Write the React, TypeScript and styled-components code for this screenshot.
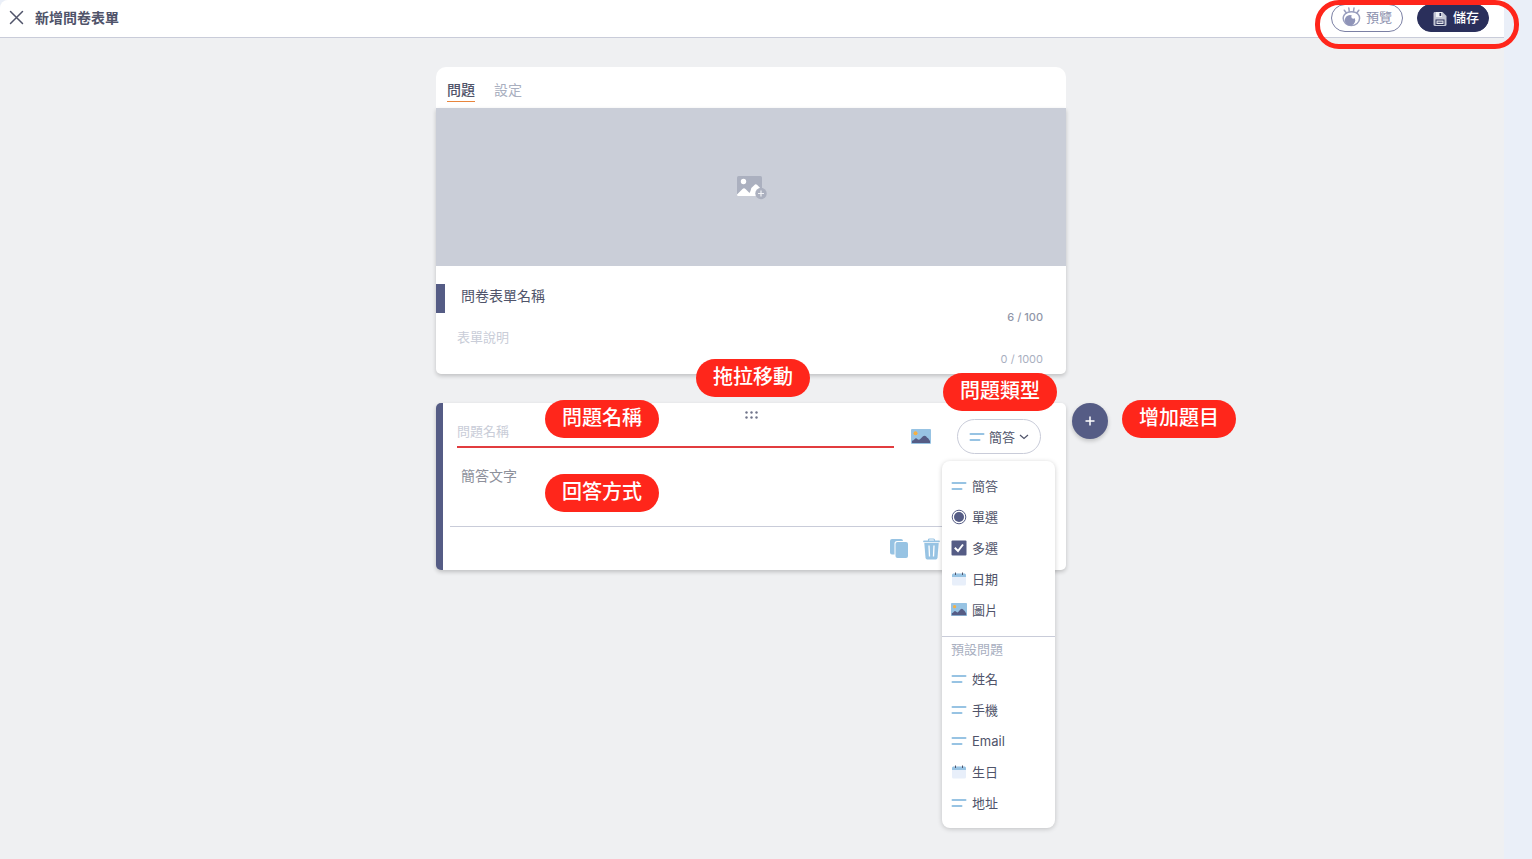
import React, { useState } from "react";
import styled, { createGlobalStyle, css } from "styled-components";

const color = {
  navy: "#2a2f5b",
  indigo: "#555c85",
  ink: "#50546a",
  muted: "#a9afbf",
  faint: "#c9cdd8",
  line: "#c9ccd9",
  sky: "#97c3e3",
  red: "#ff261b",
};

const GlobalStyle = createGlobalStyle`
  *, *::before, *::after { box-sizing: border-box; }
  body {
    margin: 0;
    background: #eaeff8;
    color: ${color.ink};
    font-family: Inter, "Noto Sans CJK TC", sans-serif;
    font-size: 13px;
  }
  button, input {
    margin: 0;
    padding: 0;
    border: 0;
    background: none;
    color: inherit;
    font: inherit;
  }
  button { cursor: pointer; }
  svg { display: block; flex: none; }
`;

const Page = styled.div`
  display: flex;
  flex-direction: column;
  min-height: 100vh;
  margin-right: 28px;
  background: #eff0f2;
  border-top-left-radius: 8px;
`;

const Header = styled.header`
  position: relative;
  display: flex;
  align-items: center;
  justify-content: space-between;
  height: 38px;
  padding: 0 15px 2px 9px;
  background: #fff;
  border-bottom: 1px solid ${color.line};
  border-top-left-radius: 8px;
`;

const HeaderGroup = styled.div<{ $gap: number }>`
  display: flex;
  align-items: center;
  gap: ${(p) => p.$gap}px;
`;

const PageTitle = styled.h1`
  margin: 0;
  font-size: 14px;
  line-height: 20px;
  font-weight: 700;
`;

const PillButton = styled.button<{ $solid?: boolean }>`
  display: flex;
  align-items: center;
  justify-content: center;
  gap: 5px;
  width: 72px;
  height: 28px;
  padding-bottom: 2px;
  border: 1px solid #7b80a4;
  border-radius: 14px;
  background: #fff;
  color: #8b90ae;
  ${(p) =>
    p.$solid &&
    css`
      gap: 6px;
      padding-left: 6px;
      border-color: ${color.navy};
      background: ${color.navy};
      color: #fff;
      font-weight: 500;
    `}
`;

const Highlight = styled.div`
  position: absolute;
  top: 0;
  right: -15px;
  width: 204px;
  height: 49px;
  border: 5px solid ${color.red};
  border-radius: 24px;
  pointer-events: none;
`;

const Main = styled.main`
  display: flex;
  justify-content: center;
  padding: 29px 2px 31px 0;
`;

const Column = styled.div`
  position: relative;
  width: 100%;
  max-width: 630px;
`;

const Tabs = styled.nav`
  display: flex;
  align-items: flex-start;
  gap: 19px;
  height: 41px;
  padding: 12px 11px 0;
  background: #fff;
  border-radius: 10px 10px 0 0;
`;

const Tab = styled.button<{ $active: boolean }>`
  height: 23px;
  border-bottom: 1px solid ${(p) => (p.$active ? "#e8853d" : "transparent")};
  color: ${(p) => (p.$active ? color.ink : color.muted)};
  font-size: 14px;
  line-height: 22px;
  font-weight: ${(p) => (p.$active ? 500 : 400)};
`;

const Card = styled.section`
  background: #fff;
  border-radius: 0 0 5px 5px;
  box-shadow: 0 2px 4px rgba(0, 0, 0, 0.2);
`;

const Banner = styled.button`
  display: flex;
  align-items: center;
  justify-content: center;
  width: 100%;
  height: 158px;
  padding-top: 2px;
  background: #caced8;
`;

const FormInfo = styled.div`
  display: flex;
  align-items: flex-start;
  gap: 12px;
  padding: 18px 23px 8px 0;
`;

const Accent = styled.span`
  width: 9px;
  height: 29px;
  background: ${color.indigo};
`;

const Fields = styled.div`
  display: flex;
  flex: 1;
  flex-direction: column;
  gap: 2px;
`;

const TextInput = styled.input<{ $large?: boolean }>`
  width: 100%;
  height: 24px;
  outline: none;
  padding: 0 0 2px ${(p) => (p.$large ? 4 : 0)}px;
  font-size: ${(p) => (p.$large ? 14 : 13)}px;
  &::placeholder {
    color: ${color.faint};
    opacity: 1;
  }
`;

const Counter = styled.output<{ $strong?: boolean }>`
  color: ${(p) => (p.$strong ? "#9096a8" : color.muted)};
  font-size: 11px;
  line-height: 14px;
  font-weight: ${(p) => (p.$strong ? 500 : 400)};
  text-align: right;
`;

const QuestionCard = styled(Card)`
  position: relative;
  margin-top: 29px;
  border-left: 7px solid ${color.indigo};
  border-radius: 5px;
`;

const DragHandle = styled.button`
  display: flex;
  align-items: flex-end;
  justify-content: center;
  width: 100%;
  height: 16px;
  padding-right: 7px;
  cursor: grab;
`;

const QuestionRow = styled.div`
  display: flex;
  align-items: center;
  height: 35px;
  padding: 0 25px 0 14px;
`;

const QuestionInput = styled(TextInput)`
  flex: 1;
  align-self: flex-start;
  height: 29px;
  margin-right: 17px;
  padding-bottom: 4px;
  border-bottom: 2px solid #e23c3f;
`;

const IconButton = styled.button`
  display: flex;
`;

const TypePicker = styled.div`
  position: relative;
  margin-left: 26px;
`;

const TypeButton = styled.button`
  display: flex;
  align-items: center;
  justify-content: center;
  gap: 4px;
  width: 84px;
  height: 35px;
  border: 1px solid ${color.line};
  border-radius: 18px;
  background: #fff;
`;

const Menu = styled.div`
  position: absolute;
  z-index: 2;
  top: 42px;
  right: -14px;
  width: 113px;
  background: #fff;
  border-radius: 8px;
  box-shadow: 0 1px 5px rgba(0, 0, 0, 0.2);
`;

const MenuGroup = styled.div`
  padding: 9px 0 11px;
  & + & {
    padding: 0 0 10px;
    border-top: 1px solid ${color.line};
  }
`;

const MenuCaption = styled.p`
  margin: 0 0 2px;
  padding-left: 9px;
  color: ${color.muted};
  line-height: 24px;
`;

const MenuItem = styled.button`
  display: flex;
  align-items: center;
  gap: 5px;
  width: 100%;
  height: 31px;
  padding-left: 9px;
  text-align: left;
`;

const AnswerInput = styled(TextInput)`
  display: block;
  height: 28px;
  margin: 8px 0 36px;
  padding-left: 18px;
  &::placeholder {
    color: #8d909b;
  }
`;

const CardActions = styled.div`
  display: flex;
  align-items: center;
  justify-content: flex-end;
  gap: 15px;
  height: 44px;
  margin: 0 11px 0 7px;
  padding-right: 115px;
  border-top: 1px solid ${color.line};
`;

const AddButton = styled.button`
  position: absolute;
  top: 0;
  left: calc(100% + 6px);
  display: flex;
  align-items: center;
  justify-content: center;
  width: 36px;
  height: 36px;
  border-radius: 50%;
  background: ${color.indigo};
  box-shadow: 0 2px 4px rgba(0, 0, 0, 0.2);
`;

const Note = styled.span<{ $left: number; $top: number }>`
  position: absolute;
  z-index: 3;
  left: ${(p) => p.$left}px;
  top: ${(p) => p.$top}px;
  display: flex;
  justify-content: center;
  width: 114px;
  height: 38px;
  border-radius: 19px;
  background: ${color.red};
  color: #fff;
  font-size: 20px;
  line-height: 36px;
  font-weight: 500;
  pointer-events: none;
`;

const CloseIcon = () => (
  <svg width="15" height="15" viewBox="0 0 15 15" fill="none" stroke={color.ink} strokeWidth="1.5" strokeLinecap="round">
    <path d="M1.5 1.5l12 12M13.5 1.5l-12 12" />
  </svg>
);

const EyeIcon = () => (
  <svg width="19" height="20" viewBox="0 0 19 20">
    <g fill="none" stroke="#9a9fbe" strokeWidth="1.5" strokeLinecap="round">
      <path d="M5 5.6C2.600 7 1.200 9.200 1.200 11.300c0 4 3.600 7.300 8.100 7.300s8.300-3.300 8.300-7.300c0-2.200-1.300-4.300-3.500-5.600" />
      <path d="M5 5.600q4.500-1.800 9.100 0" />
      <path d="M7.300 4.500L6.800 1M11.500 4.500L12 1M4.300 6L2.300 3.200M14.800 6l2-2.800" />
    </g>
    <circle cx="8" cy="13.200" r="5.200" fill="#8f94b8" />
    <circle cx="11.300" cy="9.700" r="2" fill="#fff" />
  </svg>
);

const SaveIcon = () => (
  <svg width="14" height="18" viewBox="0 -4 14 18">
    <path d="M1.5 0H9.500L13.500 4V12.500q0 1.500-1.500 1.500H2Q.5 14 .5 12.500V1.500Q.5 0 1.500 0z" fill="#c3c6d5" />
    <path d="M3 0h6v5H3z" fill="#eef0f5" />
    <path d="M6.500 1h1.700v3H6.500z" fill={color.navy} />
    <path d="M2.500 7.500h9v5.500h-9z" fill={color.navy} />
    <path d="M3.500 8.500h7v3.500h-7z" fill="#e9eaf0" />
    <path d="M4.500 10.200h5" stroke={color.navy} />
  </svg>
);

const AddImageIcon = () => (
  <svg width="31" height="24" viewBox="0 0 31 24">
    <rect x="1" y="0" width="25" height="20" rx="1.5" fill="#abb0bf" />
    <circle cx="7.500" cy="5.500" r="2.700" fill="#fff" />
    <path d="M1 18.500l5.500-5.500q1.500-1.300 3 0l4 4 1-2 .800-3 3.700-3.500q1-.7 2 .3l5 5.200V20H2q-1 0-1-1z" fill="#fff" />
    <circle cx="25" cy="17.500" r="5.700" fill="#abb0bf" />
    <path d="M25 14.500v6M22 17.500h6" stroke="#f1f2f5" strokeWidth="1.200" />
  </svg>
);

const ImageIcon = ({ width, height }: { width: number; height: number }) => (
  <svg width={width} height={height} viewBox="0 0 20 15" preserveAspectRatio="none">
    <rect width="20" height="15" rx="1" fill={color.sky} />
    <circle cx="4.500" cy="4.200" r="2" fill="#f6b042" />
    <path
      d="M1 14v-2.200q1.500-.3 2.500-1.600 1.500-1.700 3 0l1 .600q1 .2 1.800-.8l2.700-2.700q1.500-1.200 3 0l1.200 1.400q.8.100 1.300 1l1.500 2.300v2z"
      fill={color.indigo}
    />
  </svg>
);

const LinesIcon = () => (
  <svg width="16" height="10" viewBox="0 0 16 10" stroke={color.sky} strokeWidth="2" strokeLinecap="round">
    <path d="M1.5 2h13M1.5 8h9" />
  </svg>
);

const RadioIcon = () => (
  <svg width="16" height="16" viewBox="0 0 16 16">
    <circle cx="8" cy="8" r="6.800" fill="#fff" stroke={color.indigo} />
    <circle cx="8" cy="8" r="5" fill={color.indigo} />
  </svg>
);

const CheckIcon = () => (
  <svg width="16" height="16" viewBox="0 0 16 16">
    <rect x=".5" y=".5" width="15" height="15" rx="1" fill={color.indigo} />
    <path d="M3.800 7.800l3.200 3.200 5-6.500" fill="none" stroke="#fff" strokeWidth="2" />
  </svg>
);

const CalendarIcon = () => (
  <svg width="16" height="14" viewBox="0 0 16 14">
    <rect x="1" y="1.500" width="14" height="12" rx="1.500" fill="#e8effa" />
    <path d="M1 5V3q0-1.500 1.500-1.500h11Q15 1.500 15 3v2z" fill={color.sky} />
    <path d="M4.500.5v2.500M11.500 .5v2.500" stroke={color.ink} />
  </svg>
);

const CopyIcon = () => (
  <svg width="18" height="19" viewBox="0 0 18 19" fill={color.sky}>
    <path d="M2 0h9q2 0 2 2H7Q4.500 2 4.500 4.500V15.500H2q-2 0-2-2V2Q0 0 2 0z" />
    <rect x="5.500" y="3" width="12.500" height="16" rx="2" />
  </svg>
);

const TrashIcon = () => (
  <svg width="17" height="22" viewBox="0 0 17 22" fill="none">
    <path d="M5.500 3V2q0-1 1-1h4q1 0 1 1v1" stroke={color.sky} strokeWidth="1.200" />
    <path d="M1 3.300h15" stroke={color.sky} strokeWidth="1.800" strokeLinecap="round" />
    <path d="M1.300 5h14.400l-1.200 14.800q-.2 1.700-1.700 1.700H4.200q-1.500 0-1.700-1.700z" fill={color.sky} />
    <path d="M6 7.500l.5 11M11 7.500l-.5 11" stroke="#fff" strokeWidth="1.300" />
  </svg>
);

const DotsIcon = () => (
  <svg width="13" height="8" viewBox="0 0 13 8" fill="#70748a">
    {[1.5, 6.5, 11.5].map((x) => (
      <React.Fragment key={x}>
        <circle cx={x} cy="1.5" r="1.200" />
        <circle cx={x} cy="6.5" r="1.200" />
      </React.Fragment>
    ))}
  </svg>
);

const ChevronIcon = () => (
  <svg width="10" height="6" viewBox="0 0 10 6" fill="none" stroke={color.ink} strokeWidth="1.200">
    <path d="M1 1l4 3.500L9 1" />
  </svg>
);

const PlusIcon = () => (
  <svg width="10" height="10" viewBox="0 0 10 10" stroke="#fff" strokeWidth="1.500">
    <path d="M5 .5v9M.5 5h9" />
  </svg>
);

const basicTypes = [
  { label: "簡答", icon: <LinesIcon /> },
  { label: "單選", icon: <RadioIcon /> },
  { label: "多選", icon: <CheckIcon /> },
  { label: "日期", icon: <CalendarIcon /> },
  { label: "圖片", icon: <ImageIcon width={16} height={13} /> },
];

const presetTypes = [
  { label: "姓名", icon: <LinesIcon /> },
  { label: "手機", icon: <LinesIcon /> },
  { label: "Email", icon: <LinesIcon /> },
  { label: "生日", icon: <CalendarIcon /> },
  { label: "地址", icon: <LinesIcon /> },
];

const notes = [
  { text: "拖拉移動", left: 260, top: 292 },
  { text: "問題類型", left: 507, top: 306 },
  { text: "問題名稱", left: 109, top: 333 },
  { text: "增加題目", left: 686, top: 333 },
  { text: "回答方式", left: 109, top: 407 },
];

export default function App() {
  const [tab, setTab] = useState("問題");
  const [title, setTitle] = useState("問卷表單名稱");
  const [description, setDescription] = useState("");
  const [open, setOpen] = useState(true);

  return (
    <>
      <GlobalStyle />
      <Page>
        <Header>
          <HeaderGroup $gap={11}>
            <IconButton type="button" aria-label="關閉">
              <CloseIcon />
            </IconButton>
            <PageTitle>新增問卷表單</PageTitle>
          </HeaderGroup>
          <HeaderGroup $gap={14}>
            <PillButton type="button">
              <EyeIcon />
              預覽
            </PillButton>
            <PillButton type="button" $solid>
              <SaveIcon />
              儲存
            </PillButton>
          </HeaderGroup>
          <Highlight />
        </Header>

        <Main>
          <Column>
            <Tabs>
              {["問題", "設定"].map((name) => (
                <Tab key={name} type="button" $active={tab === name} onClick={() => setTab(name)}>
                  {name}
                </Tab>
              ))}
            </Tabs>
            <Card>
              <Banner type="button" aria-label="新增封面圖片">
                <AddImageIcon />
              </Banner>
              <FormInfo>
                <Accent />
                <Fields>
                  <TextInput
                    $large
                    aria-label="表單名稱"
                    value={title}
                    maxLength={100}
                    onChange={(e) => setTitle(e.target.value)}
                  />
                  <Counter $strong>{title.length} / 100</Counter>
                  <TextInput
                    aria-label="表單說明"
                    placeholder="表單說明"
                    value={description}
                    maxLength={1000}
                    onChange={(e) => setDescription(e.target.value)}
                  />
                  <Counter>{description.length} / 1000</Counter>
                </Fields>
              </FormInfo>
            </Card>

            <QuestionCard>
              <DragHandle type="button" aria-label="拖拉移動">
                <DotsIcon />
              </DragHandle>
              <QuestionRow>
                <QuestionInput aria-label="問題名稱" placeholder="問題名稱" />
                <IconButton type="button" aria-label="插入圖片">
                  <ImageIcon width={20} height={15} />
                </IconButton>
                <TypePicker>
                  <TypeButton type="button" aria-haspopup="menu" aria-expanded={open} onClick={() => setOpen(!open)}>
                    <LinesIcon />
                    簡答
                    <ChevronIcon />
                  </TypeButton>
                  {open && (
                    <Menu role="menu">
                      <MenuGroup>
                        {basicTypes.map((t) => (
                          <MenuItem key={t.label} type="button" role="menuitem">
                            {t.icon}
                            {t.label}
                          </MenuItem>
                        ))}
                      </MenuGroup>
                      <MenuGroup>
                        <MenuCaption>預設問題</MenuCaption>
                        {presetTypes.map((t) => (
                          <MenuItem key={t.label} type="button" role="menuitem">
                            {t.icon}
                            {t.label}
                          </MenuItem>
                        ))}
                      </MenuGroup>
                    </Menu>
                  )}
                </TypePicker>
              </QuestionRow>
              <AnswerInput $large aria-label="簡答文字" placeholder="簡答文字" readOnly />
              <CardActions>
                <IconButton type="button" aria-label="複製">
                  <CopyIcon />
                </IconButton>
                <IconButton type="button" aria-label="刪除">
                  <TrashIcon />
                </IconButton>
              </CardActions>
              <AddButton type="button" aria-label="增加題目">
                <PlusIcon />
              </AddButton>
            </QuestionCard>

            {notes.map((n) => (
              <Note key={n.text} $left={n.left} $top={n.top}>
                {n.text}
              </Note>
            ))}
          </Column>
        </Main>
      </Page>
    </>
  );
}
